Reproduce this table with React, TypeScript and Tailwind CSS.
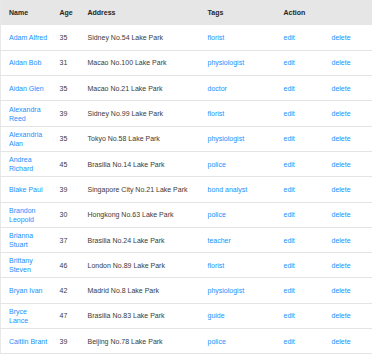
const rows = [
  { name: 'Adam Alfred', age: 35, address: 'Sidney No.54 Lake Park', tag: 'florist' },
  { name: 'Aidan Bob', age: 31, address: 'Macao No.100 Lake Park', tag: 'physiologist' },
  { name: 'Aidan Glen', age: 35, address: 'Macao No.21 Lake Park', tag: 'doctor' },
  { name: 'Alexandra\nReed', age: 39, address: 'Sidney No.99 Lake Park', tag: 'florist' },
  { name: 'Alexandria\nAlan', age: 35, address: 'Tokyo No.58 Lake Park', tag: 'physiologist' },
  { name: 'Andrea\nRichard', age: 45, address: 'Brasilia No.14 Lake Park', tag: 'police' },
  { name: 'Blake Paul', age: 39, address: 'Singapore City No.21 Lake Park', tag: 'bond analyst' },
  { name: 'Brandon\nLeopold', age: 30, address: 'Hongkong No.63 Lake Park', tag: 'police' },
  { name: 'Brianna\nStuart', age: 37, address: 'Brasilia No.24 Lake Park', tag: 'teacher' },
  { name: 'Brittany\nSteven', age: 46, address: 'London No.89 Lake Park', tag: 'florist' },
  { name: 'Bryan Ivan', age: 42, address: 'Madrid No.8 Lake Park', tag: 'physiologist' },
  { name: 'Bryce\nLance', age: 47, address: 'Brasilia No.83 Lake Park', tag: 'guide' },
  { name: 'Caitlin Brant', age: 39, address: 'Beijing No.78 Lake Park', tag: 'police' },
];

const App = () => {
  return (
    <div className="w-[373px] h-[356px] overflow-hidden bg-white font-['Liberation_Sans',Arial,sans-serif] text-[7px] leading-[9px]">
      <table className="w-[372px] border-collapse table-fixed border-l border-[#e8e8e8]">
        <colgroup>
          <col className="w-[59px]" />
          <col className="w-[28px]" />
          <col className="w-[120px]" />
          <col className="w-[76px]" />
          <col className="w-[48px]" />
          <col />
        </colgroup>
        <thead>
          <tr className="h-[25px] bg-[#e6e6e6] text-left text-[#262626]">
            <th className="pl-2 font-bold">Name</th>
            <th className="font-bold">Age</th>
            <th className="font-bold">Address</th>
            <th className="font-bold">Tags</th>
            <th className="font-bold">Action</th>
            <th />
          </tr>
        </thead>
        <tbody>
          {rows.map((r) => (
            <tr key={r.name} className="h-[25.3px] border-b border-[#e4e4e4] text-[#3a3a3a]">
              <td className="pl-2 text-[#1890ff] whitespace-pre-line">{r.name}</td>
              <td>{r.age}</td>
              <td className="whitespace-nowrap">{r.address}</td>
              <td className="text-[#1890ff] whitespace-nowrap">{r.tag}</td>
              <td className="text-[#1890ff]">edit</td>
              <td className="text-[#1890ff]">delete</td>
            </tr>
          ))}
        </tbody>
      </table>
    </div>
  );
};

export default App;
